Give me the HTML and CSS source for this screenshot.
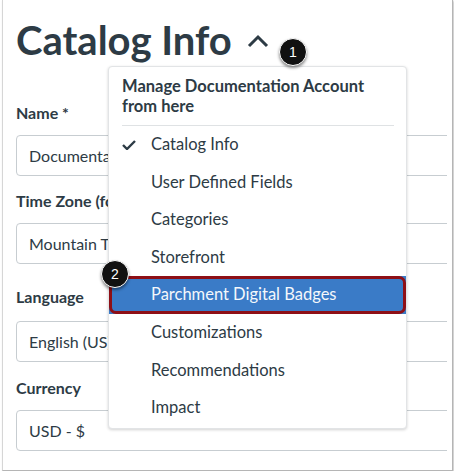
FILE: index.html
```html
<!DOCTYPE html>
<html>
<head>
<meta charset="utf-8">
<link rel="stylesheet" href="styles.css">
</head>
<body>
<div class="frame">
  <div class="clip">
    <div class="title-row">
      <h1 class="title">Catalog Info</h1>
      <svg class="chevron" width="22" height="14" viewBox="0 0 22 14"><path d="M2 12 L11 3 L20 12" fill="none" stroke="#2d3b45" stroke-width="3"/></svg>
    </div>
    <div class="form">
      <div class="field field-name">
        <div class="label">Name *</div>
        <div class="input">Documentation Account</div>
      </div>
      <div class="field field-tz">
        <div class="label">Time Zone (for dates and times)</div>
        <div class="input">Mountain Time (US &amp; Canada)</div>
      </div>
      <div class="field field-lang">
        <div class="label">Language</div>
        <div class="input">English (US)</div>
      </div>
      <div class="field">
        <div class="label">Currency</div>
        <div class="input">USD - $</div>
      </div>
    </div>
  </div>

  <div class="menu">
    <div class="menu-head">Manage Documentation Account from here</div>
    <div class="menu-sep"></div>
    <div class="item"><svg class="check" width="14" height="10" viewBox="0 0 14 10"><path d="M1 5 L5 9 L13 1" fill="none" stroke="#2d3b45" stroke-width="2.4"/></svg>Catalog Info</div>
    <div class="item">User Defined Fields</div>
    <div class="item">Categories</div>
    <div class="item">Storefront</div>
    <div class="item item-active">Parchment Digital Badges<span class="callout"></span></div>
    <div class="item">Customizations</div>
    <div class="item">Recommendations</div>
    <div class="item">Impact</div>
  </div>

  <div class="badge badge-1">1</div>
  <div class="badge badge-2">2</div>
</div>
</body>
</html>
```

FILE: styles.css
```css
html, body {
  margin: 0;
  padding: 0;
  background: #ffffff;
}
body {
  font-family: Lato, "Noto Sans", sans-serif;
  color: #2d3b45;
}
.frame {
  position: relative;
  box-sizing: border-box;
  margin-left: 2px;
  width: 451px;
  height: 471px;
  border-left: 1px solid #d6d6d6;
  border-right: 1px solid #b5b5b5;
  border-bottom: 1px solid #b5b5b5;
  box-shadow: 1px 1px 2px rgba(0, 0, 0, 0.25);
  background: #fff;
}
.clip {
  width: 444px;
  height: 100%;
  overflow: hidden;
  padding-left: 13px;
  box-sizing: border-box;
}
.title-row {
  display: flex;
  align-items: center;
  padding-top: 16px;
  height: 48px;
}
.title {
  margin: 0;
  font-size: 40px;
  line-height: 48px;
  font-weight: 700;
  color: #2d3b45;
  white-space: nowrap;
}
.chevron {
  margin-left: 15px;
  margin-top: 2px;
}
.form {
  margin-top: 37px;
  width: 520px;
}
.field {
  margin-bottom: 14px;
}
.field-name {
  margin-bottom: 13px;
}
.field-tz {
  margin-bottom: 21px;
}
.label {
  font-size: 16px;
  font-weight: 700;
  line-height: 24px;
  margin-bottom: 10px;
  white-space: nowrap;
}
.field-tz .label {
  margin-bottom: 10px;
}
.field-lang .label {
  margin-bottom: 12px;
}
.input {
  box-sizing: border-box;
  height: 41px;
  border: 1px solid #c7cdd1;
  border-radius: 4px;
  padding-left: 12px;
  font-size: 16px;
  line-height: 39px;
  white-space: nowrap;
}
.menu {
  position: absolute;
  left: 105px;
  top: 66px;
  width: 299px;
  box-sizing: border-box;
  background: #fff;
  border: 1px solid #e2e4e6;
  border-radius: 4px;
  box-shadow: 0 1px 3px rgba(0, 0, 0, 0.18);
  padding-bottom: 1px;
}
.menu-head {
  padding: 9px 12px 9px 13px;
  font-size: 16.5px;
  font-weight: 700;
  line-height: 20px;
}
.menu-sep {
  height: 1px;
  background: #dfe2e4;
  margin: 0 12px 0 13px;
}
.item {
  position: relative;
  height: 37.6px;
  line-height: 37.6px;
  padding-left: 42px;
  font-size: 16.5px;
  white-space: nowrap;
}
.check {
  position: absolute;
  left: 13px;
  top: 14px;
}
.item-active {
  background: #3a7bc7;
  color: #f4f7fb;
}
.callout {
  position: absolute;
  inset: 0 0 0 0;
  border: 3px solid #8e0f16;
  border-radius: 7px;
}
.badge {
  position: absolute;
  box-sizing: border-box;
  width: 28px;
  height: 28px;
  border-radius: 50%;
  background: #111;
  border: 1px solid #fff;
  box-shadow: 0 2px 3px rgba(0, 0, 0, 0.45);
  color: #fff;
  font-family: "Liberation Sans", Arial, sans-serif;
  font-size: 14px;
  line-height: 26px;
  text-align: center;
}
.badge-1 {
  left: 276px;
  top: 38px;
}
.badge-2 {
  left: 98px;
  top: 260px;
}
```
